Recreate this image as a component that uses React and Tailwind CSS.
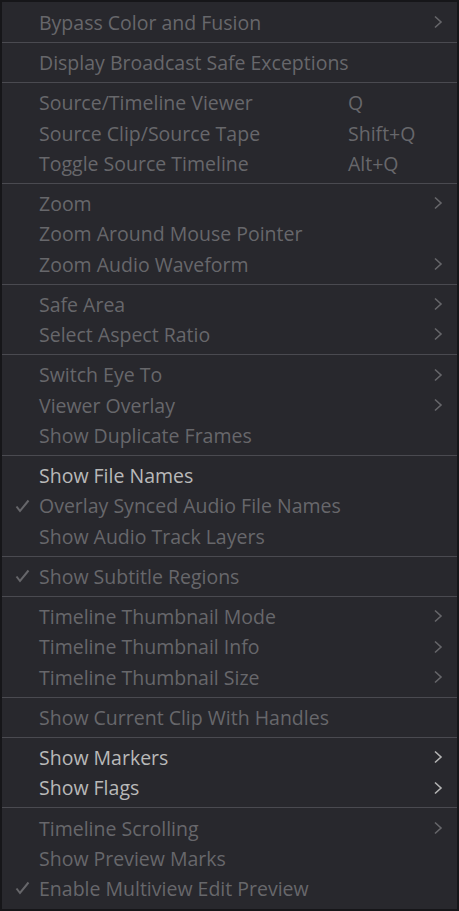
import React from "react";

const groups = [
  [{ label: "Bypass Color and Fusion", sub: true }],
  [{ label: "Display Broadcast Safe Exceptions" }],
  [
    { label: "Source/Timeline Viewer", key: "Q" },
    { label: "Source Clip/Source Tape", key: "Shift+Q" },
    { label: "Toggle Source Timeline", key: "Alt+Q" },
  ],
  [
    { label: "Zoom", sub: true },
    { label: "Zoom Around Mouse Pointer" },
    { label: "Zoom Audio Waveform", sub: true },
  ],
  [
    { label: "Safe Area", sub: true },
    { label: "Select Aspect Ratio", sub: true },
  ],
  [
    { label: "Switch Eye To", sub: true },
    { label: "Viewer Overlay", sub: true },
    { label: "Show Duplicate Frames" },
  ],
  [
    { label: "Show File Names", active: true },
    { label: "Overlay Synced Audio File Names", checked: true },
    { label: "Show Audio Track Layers" },
  ],
  [{ label: "Show Subtitle Regions", checked: true }],
  [
    { label: "Timeline Thumbnail Mode", sub: true },
    { label: "Timeline Thumbnail Info", sub: true },
    { label: "Timeline Thumbnail Size", sub: true },
  ],
  [{ label: "Show Current Clip With Handles" }],
  [
    { label: "Show Markers", sub: true, active: true },
    { label: "Show Flags", sub: true, active: true },
  ],
  [
    { label: "Timeline Scrolling", sub: true },
    { label: "Show Preview Marks" },
    { label: "Enable Multiview Edit Preview", checked: true },
  ],
];

const Chevron = ({ active }) => (
  <svg width="10" height="14" viewBox="0 0 10 14" className={active ? "text-[#b4b4b4]" : "text-[#66666a]"}>
    <polyline points="2,1.5 8,7 2,12.5" fill="none" stroke="currentColor" strokeWidth="1.6" />
  </svg>
);

const Check = () => (
  <svg width="15" height="14" viewBox="0 0 15 14" className="text-[#66666a]">
    <polyline points="1.5,7.5 5,12 13.5,1.5" fill="none" stroke="currentColor" strokeWidth="2" />
  </svg>
);

const MenuItem = ({ item }) => (
  <div className="relative flex h-[30.25px] items-center">
    <div className="flex w-[37px] justify-center pl-[3px]">{item.checked && <Check />}</div>
    <span className={`flex-1 pt-[1px] ${item.active ? "text-[#b9b9b9]" : "text-[#67676b]"}`}>{item.label}</span>
    {item.key && <span className="absolute left-[346px] pt-[1px] text-[#67676b]">{item.key}</span>}
    {item.sub && (
      <div className="mr-[14px]">
        <Chevron active={item.active} />
      </div>
    )}
  </div>
);

export default function App() {
  return (
    <div
      className="h-[911px] w-[459px] border-2 border-[#161619] bg-[#28282d] py-[5px] text-[19.5px] leading-none"
      style={{ fontFamily: '"Open Sans", sans-serif' }}
    >
      {groups.map((group, gi) => (
        <div key={gi}>
          {gi > 0 && <div className="my-[4.5px] h-px bg-[#4a4a50]" />}
          {group.map((item) => (
            <MenuItem key={item.label} item={item} />
          ))}
        </div>
      ))}
    </div>
  );
}
